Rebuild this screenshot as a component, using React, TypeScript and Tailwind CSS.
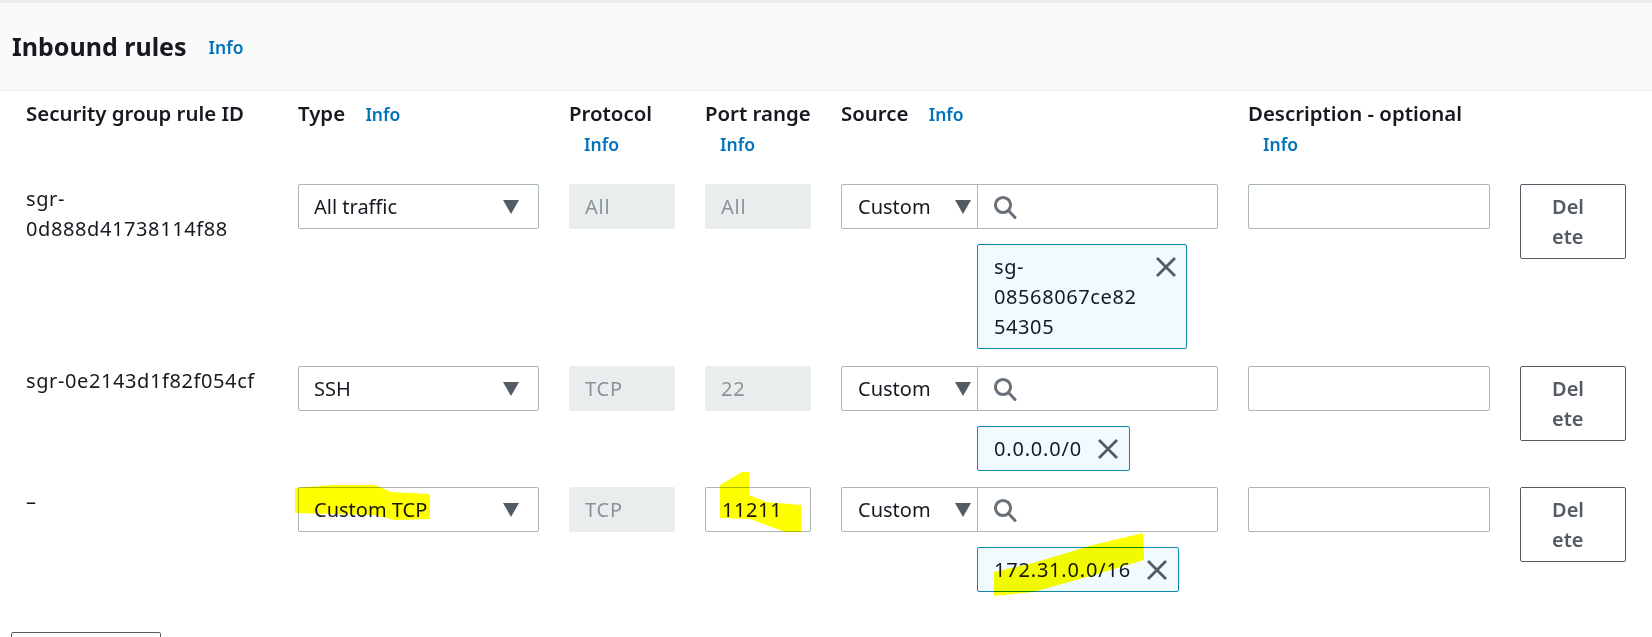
import React from 'react';

const FONT = "font-['Noto_Sans',sans-serif]";

const Info = ({ className = '' }: { className?: string }) => (
  <span className={`text-[17.5px] leading-[30px] font-semibold tracking-normal text-[#0073bb] ${className}`}>Info</span>
);

const Caret = ({ className = '' }: { className?: string }) => (
  <svg width="16" height="14" viewBox="0 0 16 14" className={className} aria-hidden="true">
    <path d="M0 0h16L8 14z" fill="#545b64" />
  </svg>
);

const SearchIcon = () => (
  <svg width="24" height="24" viewBox="0 0 24 24" fill="none" stroke="#687078" strokeWidth="3" aria-hidden="true">
    <circle cx="10" cy="10" r="7.6" />
    <path d="M15.5 15.5l6.5 7" strokeLinecap="round" />
  </svg>
);

const Close = () => (
  <svg width="20" height="20" viewBox="0 0 20 20" fill="none" stroke="#545b64" strokeWidth="2.8" className="shrink-0" aria-hidden="true">
    <path d="M1 1l18 18M19 1L1 19" />
  </svg>
);

const Select = ({ value }: { value: string }) => (
  <div className="h-[45px] flex items-center justify-between pl-[15px] pr-[19px] bg-white border border-[#aab7b8] rounded-[2px]">
    <span>{value}</span>
    <Caret />
  </div>
);

const Disabled = ({ value }: { value: string }) => (
  <div className="h-[45px] flex items-center pl-[16px] bg-[#eaeded] rounded-[2px] text-[#879596] tracking-[0.8px]">{value}</div>
);

const Source = ({ chip, multi }: { chip: string; multi?: boolean }) => (
  <div>
    <div className="h-[45px] flex bg-white border border-[#aab7b8] rounded-[2px]">
      <div className="w-[136px] flex items-center justify-between pl-[16px] pr-[6px] border-r border-[#aab7b8]">
        <span>Custom</span>
        <Caret />
      </div>
      <div className="flex items-center pl-[15px]">
        <SearchIcon />
      </div>
    </div>
    <div className="pl-[136px] mt-[15px]">
      {multi ? (
        <div className="w-[210px] h-[105px] pl-[16px] pr-[10px] pt-[7px] flex justify-between bg-[#f1faff] border border-[#0f87a8] rounded-[2px]">
          <span className="w-[150px] tracking-[0.6px] whitespace-nowrap">
            sg-
            <br />
            08568067ce82
            <br />
            54305
          </span>
          <span className="pt-[5px]">
            <Close />
          </span>
        </div>
      ) : (
        <div className="flex w-fit items-center gap-[16px] h-[45px] mb-[-1px] pl-[16px] pr-[11px] bg-[#f1faff] border border-[#0f87a8] rounded-[2px]">
          <span className="tracking-[0.8px]">{chip}</span>
          <Close />
        </div>
      )}
    </div>
  </div>
);

const DeleteButton = () => (
  <div className="h-[75px] pl-[31px] pt-[7px] bg-white border border-[#545b64] rounded-[2px] text-[#545b64] font-semibold">
    Del
    <br />
    ete
  </div>
);

const RULES = [
  { id: ['sgr-', '0d888d41738114f88'], type: 'All traffic', protocol: 'All', port: 'All', chip: '', multi: true },
  { id: ['sgr-0e2143d1f82f054cf'], type: 'SSH', protocol: 'TCP', port: '22', chip: '0.0.0.0/0' },
  { id: ['–'], type: 'Custom TCP', protocol: 'TCP', port: '11211', chip: '172.31.0.0/16', editable: true },
];

export default function App() {
  return (
    <div className={`relative w-[1652px] h-[637px] overflow-hidden bg-white text-[20px] leading-[30px] text-[#16191f] ${FONT}`}>
      {/* Panel header */}
      <div className="h-[91px] flex items-center gap-[22px] pl-[12px] pb-[2px] bg-[#fafafa] border-t-[3px] border-b border-[#eaeded]">
        <h2 className="text-[25px] font-bold">Inbound rules</h2>
        <Info className="mt-[2px]" />
      </div>

      <div className="grid grid-cols-[242px_241px_106px_106px_377px_242px_106px] gap-x-[30px] gap-y-[17px] pl-[26px]">
        {/* Column headings */}
        <div className="col-span-7 grid grid-cols-subgrid h-[76px] pt-[7px] font-semibold text-[20.4px]">
          <div className="whitespace-nowrap">Security group rule ID</div>
          <div>
            Type <Info className="ml-[15px]" />
          </div>
          <div className="whitespace-nowrap">
            Protocol
            <br />
            <Info className="ml-[15px]" />
          </div>
          <div className="whitespace-nowrap">
            Port range
            <br />
            <Info className="ml-[15px]" />
          </div>
          <div>
            Source <Info className="ml-[15px]" />
          </div>
          <div className="whitespace-nowrap">
            Description - optional
            <br />
            <Info className="ml-[15px]" />
          </div>
          <div />
        </div>

        {RULES.map((r) => (
          <div key={r.type} className="col-span-7 grid grid-cols-subgrid">
            <div className="whitespace-nowrap tracking-[0.6px]">
              {r.id.map((line) => (
                <div key={line}>{line}</div>
              ))}
            </div>
            <Select value={r.type} />
            <Disabled value={r.protocol} />
            {r.editable ? (
              <div className="h-[45px] flex items-center pl-[16px] bg-white border border-[#aab7b8] rounded-[2px] tracking-[0.6px]">{r.port}</div>
            ) : (
              <Disabled value={r.port} />
            )}
            <Source chip={r.chip} multi={r.multi} />
            <div className="h-[45px] bg-white border border-[#aab7b8] rounded-[2px]" />
            <DeleteButton />
          </div>
        ))}
      </div>

      {/* Button cut off by the bottom edge */}
      <div className="absolute left-[11px] top-[632px] w-[150px] h-[40px] bg-white border border-[#545b64] rounded-[2px]" />

      {/* Yellow marker strokes drawn over the screenshot */}
      <svg className="absolute inset-0 mix-blend-multiply pointer-events-none" width="1652" height="637" aria-hidden="true">
        <g fill="#ffff00">
          <path d="M295 488L332 485L375 485L391 492L430 494L430 519L394 520L375 515L295 513Z" />
          <path d="M720 485L742 472L749 472L749 495L766 502L801 505L801 532L785 532L750 519L720 518Z" />
          <path d="M994 572L1033 563L1093 545L1143 533L1144 560L1087 577L1033 592L994 596Z" />
        </g>
      </svg>
    </div>
  );
}
